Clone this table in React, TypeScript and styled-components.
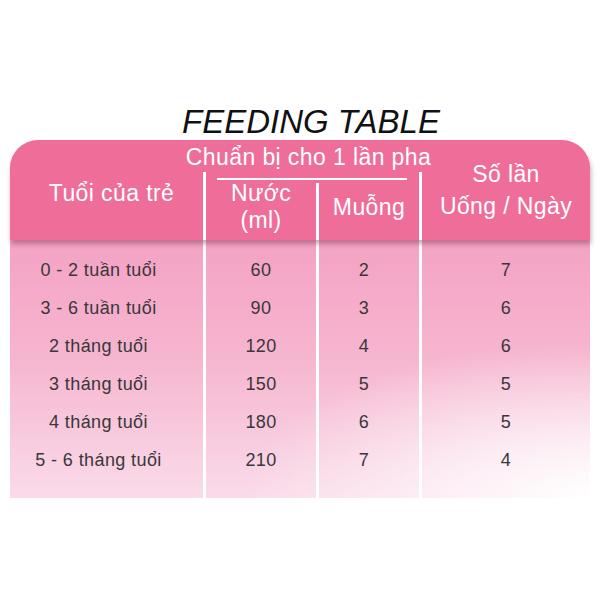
import React from 'react';
import styled, { createGlobalStyle } from 'styled-components';

const Global = createGlobalStyle`
  html, body {
    margin: 0;
    padding: 0;
    background: #ffffff;
  }
  body {
    font-family: "Liberation Sans", Arial, sans-serif;
  }
`;

const Page = styled.div`
  width: 600px;
  height: 600px;
  padding-top: 106px;
  box-sizing: border-box;
`;

const Title = styled.h1`
  margin: 0 0 2px;
  padding-left: 22px;
  text-align: center;
  font-size: 33px;
  line-height: 32px;
  font-weight: 400;
  font-style: italic;
  color: #111;
`;

const Table = styled.div`
  margin: 0 10px;
  width: 580px;
`;

const Header = styled.div`
  position: relative;
  z-index: 1;
  height: 100px;
  display: grid;
  grid-template-columns: 193px 3px 213px 3px 1fr;
  background: #ee6d99;
  border-radius: 28px 28px 0 0;
  box-shadow: 1px 4px 5px rgba(90, 20, 45, 0.35);
  color: #ffffff;
  font-size: 23px;
  letter-spacing: 0.4px;
`;

const HeadCell = styled.div<{ $padLeft?: number; $lineHeight: number }>`
  display: flex;
  flex-direction: column;
  align-items: center;
  justify-content: center;
  text-align: center;
  white-space: nowrap;
  padding-left: ${p => p.$padLeft ?? 0}px;
  line-height: ${p => p.$lineHeight}px;
`;

const Divider = styled.div<{ $top: number }>`
  background: #ffffff;
  margin-top: ${p => p.$top}px;
`;

const Group = styled.div`
  display: flex;
  flex-direction: column;
`;

const GroupTitle = styled.div`
  height: 36px;
  padding-top: 2px;
  line-height: 30px;
  text-align: center;
  white-space: nowrap;
  margin: 0 -20px 0 -28px;
`;

const Rule = styled.div`
  height: 2px;
  margin: 0 12px 0 11px;
  background: #ffffff;
`;

const SubRow = styled.div`
  flex: 1;
  display: grid;
  grid-template-columns: 110px 3px 1fr;
`;

const BodyGrid = styled.div`
  height: 258px;
  display: grid;
  grid-template-columns: 193px 113px 103px 1fr;
  background:
    radial-gradient(ellipse 60% 60% at 100% 100%, rgba(255, 255, 255, 1) 0%, rgba(255, 255, 255, 0) 100%),
    linear-gradient(180deg, #f4a2c4 0%, #f6b5cf 45%, #fadbe9 100%);
`;

const Column = styled.div<{ $first?: boolean; $shift?: number }>`
  display: flex;
  flex-direction: column;
  padding: 11px ${p => p.$shift ?? 0}px 0 0;
  border-left: ${p => (p.$first ? 'none' : '3px solid #ffffff')};
`;

const Cell = styled.div`
  height: 38px;
  line-height: 38px;
  text-align: center;
  font-size: 18px;
  letter-spacing: 0.4px;
  color: #383838;
  white-space: nowrap;
`;

const rows = [
  ['0 - 2 tuần tuổi', '60', '2', '7'],
  ['3 - 6 tuần tuổi', '90', '3', '6'],
  ['2 tháng tuổi', '120', '4', '6'],
  ['3 tháng tuổi', '150', '5', '5'],
  ['4 tháng tuổi', '180', '6', '5'],
  ['5 - 6 tháng tuổi', '210', '7', '4'],
];

const shifts = [16, 0, 10, 0];

export default function App() {
  return (
    <>
      <Global />
      <Page>
        <Title>FEEDING TABLE</Title>
        <Table>
          <Header>
            <HeadCell $padLeft={10} $lineHeight={28} style={{ paddingTop: 6 }}>
              Tuổi của trẻ
            </HeadCell>
            <Divider $top={32} />
            <Group>
              <GroupTitle>Chuẩn bị cho 1 lần pha</GroupTitle>
              <Rule />
              <SubRow>
                <HeadCell $lineHeight={27} style={{ paddingBottom: 6 }}>
                  <span>Nước</span>
                  <span>(ml)</span>
                </HeadCell>
                <Divider $top={3} />
                <HeadCell $lineHeight={28} style={{ paddingBottom: 6 }}>
                  Muỗng
                </HeadCell>
              </SubRow>
            </Group>
            <Divider $top={32} />
            <HeadCell $lineHeight={32}>
              <span>Số lần</span>
              <span>Uống / Ngày</span>
            </HeadCell>
          </Header>
          <BodyGrid>
            {shifts.map((shift, col) => (
              <Column key={col} $first={col === 0} $shift={shift}>
                {rows.map(r => (
                  <Cell key={r[0]}>{r[col]}</Cell>
                ))}
              </Column>
            ))}
          </BodyGrid>
        </Table>
      </Page>
    </>
  );
}
